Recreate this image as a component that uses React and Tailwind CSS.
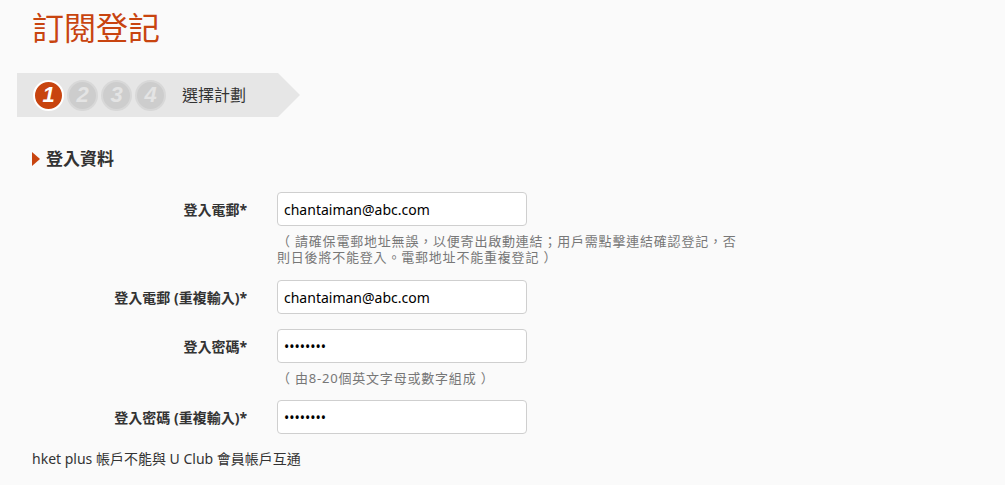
import React from 'react'

const font = { fontFamily: '"Noto Sans", "Noto Sans CJK TC", sans-serif' }

function Step({ n, active }) {
  return (
    <div
      className={
        'w-[31px] h-[31px] rounded-full flex items-center justify-center border-2 ' +
        (active ? 'bg-[#c8440f] border-white text-white' : 'bg-[#cdcdcd] border-[#d8d8d8] text-[#e4e4e4]')
      }
    >
      <span className="text-[22px] font-bold italic leading-none" style={{ fontFamily: '"Liberation Sans", Arial, sans-serif' }}>
        {n}
      </span>
    </div>
  )
}

function Field({ label, value, type = 'text', hint, className = '' }) {
  return (
    <div className={'flex ' + className}>
      <label className="w-[230px] shrink-0 text-right text-[14px] font-bold text-[#333] h-[34px] flex items-center justify-end">
        {label}
      </label>
      <div className="ml-[30px]">
        <input
          type={type}
          defaultValue={value}
          className="w-[250px] h-[34px] px-[6px] bg-white border border-[#cfcfcf] rounded-[4px] text-[14px] text-black outline-none"
        />
        {hint && (
          <p className="mt-[7px] w-[480px] text-[13px] leading-[16px] tracking-[0.8px] text-[#777]">{hint}</p>
        )}
      </div>
    </div>
  )
}

export default function App() {
  return (
    <div className="min-h-[485px] bg-[#fafafa] pl-[17px] pt-[7px] text-[#333]" style={font}>
      <h1 className="ml-[15px] text-[32px] leading-[41px] text-[#c8440f]">訂閱登記</h1>

      <div className="mt-[25px] flex items-stretch">
        <div className="w-[261px] h-[44px] bg-[#e6e6e6] flex items-center pl-[16px]">
          <div className="flex gap-[3px]">
            <Step n="1" active />
            <Step n="2" />
            <Step n="3" />
            <Step n="4" />
          </div>
          <span className="ml-[16px] text-[16px] text-[#333]">選擇計劃</span>
        </div>
        <div className="w-0 h-0 border-y-[22px] border-y-transparent border-l-[22px] border-l-[#e6e6e6]" />
      </div>

      <div className="mt-[30px] ml-[15px] flex items-center">
        <span className="w-0 h-0 border-y-[7px] border-y-transparent border-l-[8px] border-l-[#c8440f]" />
        <h2 className="ml-[6px] text-[17px] font-bold leading-[24px] text-[#333]">登入資料</h2>
      </div>

      <div className="mt-[21px]">
        <Field
          label="登入電郵*"
          value="chantaiman@abc.com"
          hint={
            <>
              （ 請確保電郵地址無誤，以便寄出啟動連結；用戶需點擊連結確認登記，否
              <br />
              則日後將不能登入。電郵地址不能重複登記 ）
            </>
          }
        />
        <Field className="mt-[15px]" label="登入電郵 (重複輸入)*" value="chantaiman@abc.com" />
        <Field
          className="mt-[15px]"
          label="登入密碼*"
          value="12345678"
          type="password"
          hint="（ 由8-20個英文字母或數字組成 ）"
        />
        <Field className="mt-[14px]" label="登入密碼 (重複輸入)*" value="12345678" type="password" />
      </div>

      <p className="mt-[15px] ml-[15px] text-[14px] leading-[20px] text-[#333]">hket plus 帳戶不能與 U Club 會員帳戶互通</p>
    </div>
  )
}
